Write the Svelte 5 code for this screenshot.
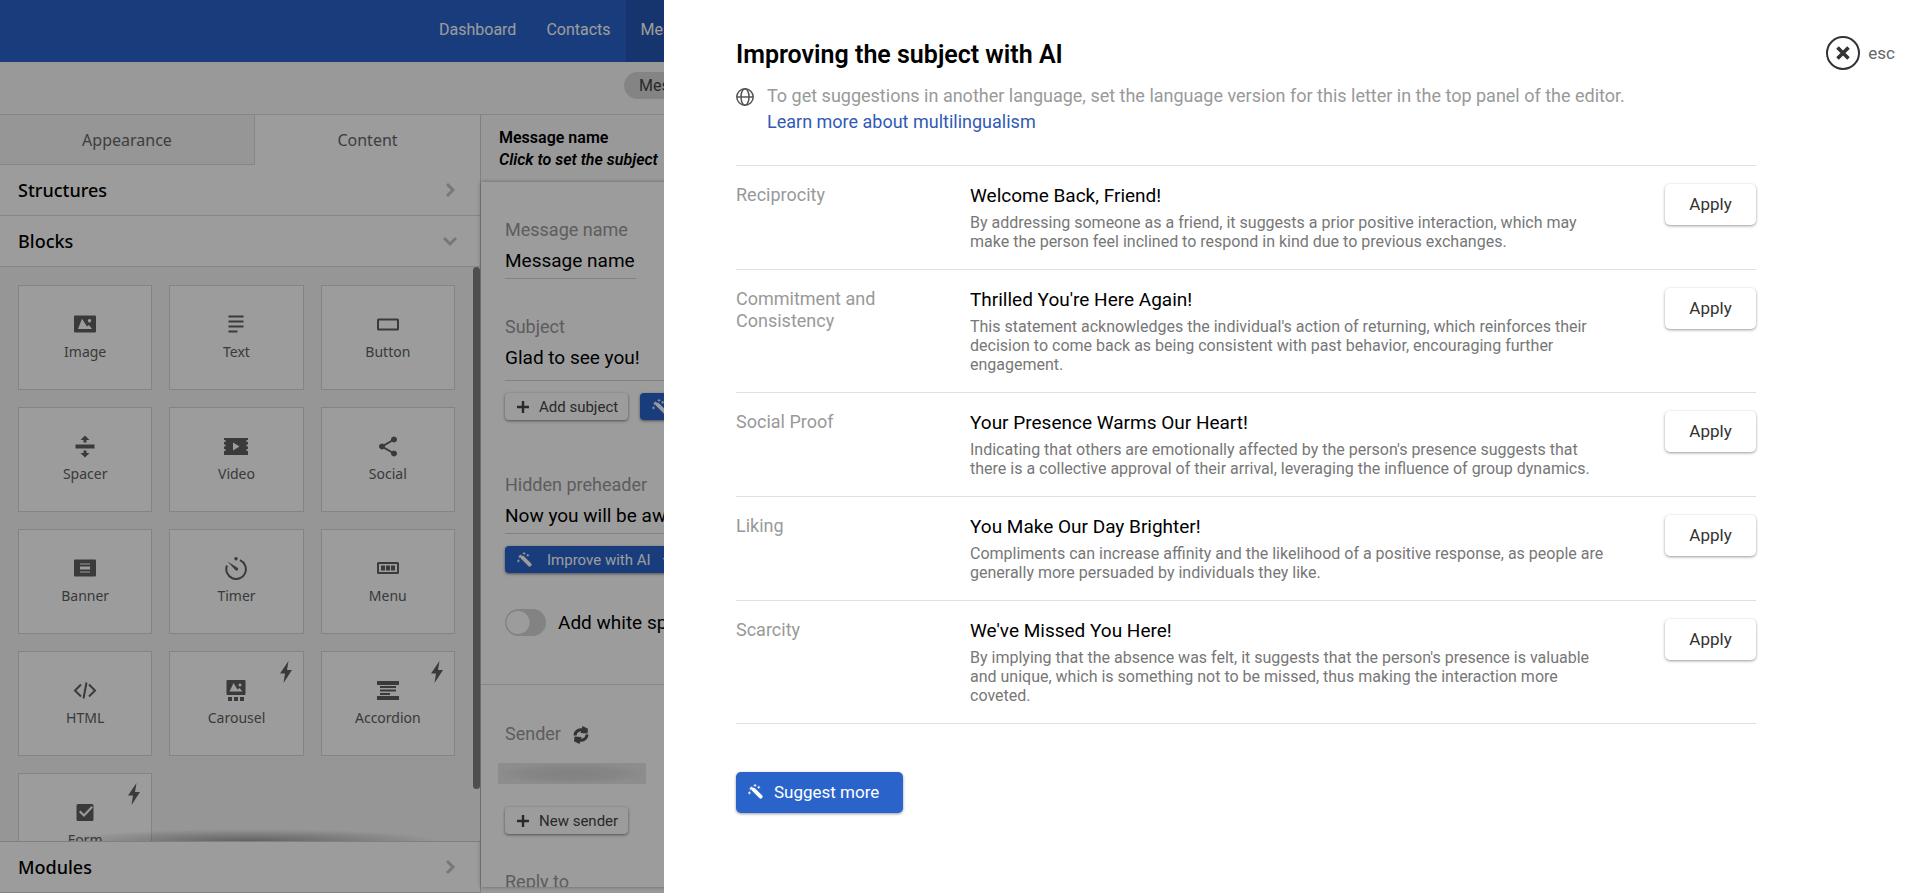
<script>
  // fill: solid shapes, line: stroked shapes, all on a 24x24 grid
  const blocks = [
    { name: 'Image', fill: 'M2 3.500h20a1 1 0 0 1 1 1v15a1 1 0 0 1-1 1H2a1 1 0 0 1-1-1v-15a1 1 0 0 1 1-1zM5 17h14l-3-4-2 1.500L9 6.800zM16.500 7a1.700 1.700 0 1 0 .01 0z' },
    { name: 'Text', line: 'M4.500 4.500h15M4.500 9.500h15M4.500 14.500h15M4.500 19.500h9' },
    { name: 'Button', line: 'M2.500 7.500h19a.5.5 0 0 1 .5.5v9a.5.5 0 0 1-.5.5h-19a.5.5 0 0 1-.5-.5V8a.5.5 0 0 1 .5-.5z' },
    { name: 'Spacer', fill: 'M2.500 10.500h19v4h-19zM12 1.500l4.500 4.500h-3v2.500h-3V6h-3zM12 23.500l4.500-4.500h-3v-2.500h-3V19h-3z' },
    { name: 'Video', fill: 'M0 4h24v2h-1.500v2H24v2.500h-1.500v2H24V15h-1.500v2H24v4H0v-4h1.500v-2H0v-2.500h1.500v-2H0V8h1.500V6H0zM9 8.500v8l6.500-4z' },
    { name: 'Social', fill: 'M6 9.500a3 3 0 1 0 .01 0zM18 2.500a3 3 0 1 0 .01 0zM18 16.500a3 3 0 1 0 .01 0z', line: 'M18 5.500L6 12.500l12 7' },
    { name: 'Banner', fill: 'M2 3.500h20a1 1 0 0 1 1 1v15a1 1 0 0 1-1 1H2a1 1 0 0 1-1-1v-15a1 1 0 0 1 1-1zM7 7.500v1h10v-1zM7 10.500v3h10v-3zM7 15.500v1h10v-1z' },
    { name: 'Timer', fill: 'M12 1a1.700 1.700 0 1 0 .01 0zM3.500 5.500l10 6.200a1.600 1.600 0 0 1-2 2.600z', line: 'M16 4.200A9.800 9.800 0 1 1 3 9.500' },
    { name: 'Menu', fill: 'M5 9.500h4v5H5zM10 9.500h4v5h-4zM15 9.500h4v5h-4z', line: 'M2.500 7h19a.5.5 0 0 1 .5.5v9a.5.5 0 0 1-.5.5h-19a.5.5 0 0 1-.5-.5v-9a.5.5 0 0 1 .5-.5z' },
    { name: 'HTML', line: 'M8 6.500L2 12.500l6 6M16 6.500l6 6-6 6M13.500 4.500l-3 16' },
    { name: 'Carousel', bolt: true, fill: 'M3.500 2h17a1 1 0 0 1 1 1v13a1 1 0 0 1-1 1h-17a1 1 0 0 1-1-1V3a1 1 0 0 1 1-1zM5.500 13.500h13l-3-3.500-2 1.500L9.500 5zM16 5.500a1.500 1.500 0 1 0 .01 0zM4 19h4v4H4zM10 19h4v4h-4zM16 19h4v4h-4z' },
    { name: 'Accordion', bolt: true, fill: 'M1 3h22v4H1zM4 8h16v2H4zM4 11.500h16v2H4zM4 15h10v2H4zM1 18h22v4H1z' },
    { name: 'Form', bolt: true, fill: 'M5 4h14a1.500 1.500 0 0 1 1.500 1.500v14A1.500 1.500 0 0 1 19 21H5a1.500 1.500 0 0 1-1.500-1.500v-14A1.500 1.500 0 0 1 5 4zM6 12l5 5 9-9.500-1.500-1.500L11 14l-3.500-3.500z' }
  ];

  const suggestions = [
    {
      principle: 'Reciprocity',
      subject: 'Welcome Back, Friend!',
      reason: 'By addressing someone as a friend, it suggests a prior positive interaction, which may make the person feel inclined to respond in kind due to previous exchanges.'
    },
    {
      principle: 'Commitment and Consistency',
      subject: "Thrilled You're Here Again!",
      reason: "This statement acknowledges the individual's action of returning, which reinforces their decision to come back as being consistent with past behavior, encouraging further engagement."
    },
    {
      principle: 'Social Proof',
      subject: 'Your Presence Warms Our Heart!',
      reason: "Indicating that others are emotionally affected by the person's presence suggests that there is a collective approval of their arrival, leveraging the influence of group dynamics."
    },
    {
      principle: 'Liking',
      subject: 'You Make Our Day Brighter!',
      reason: 'Compliments can increase affinity and the likelihood of a positive response, as people are generally more persuaded by individuals they like.'
    },
    {
      principle: 'Scarcity',
      subject: "We've Missed You Here!",
      reason: "By implying that the absence was felt, it suggests that the person's presence is valuable and unique, which is something not to be missed, thus making the interaction more coveted."
    }
  ];

  let name = $state('Message name');
  let subject = $state('Glad to see you!');
  let preheader = $state('Now you will be aware');
  let whiteSpace = $state(false);
  let open = $state(true);
</script>

<svelte:window onkeydown={(e) => e.key === 'Escape' && (open = false)} />

{#snippet wand()}
  <svg class="wand" viewBox="0 0 16 16" aria-hidden="true">
    <path d="M6 6l7.500 7.500" fill="none" stroke="currentColor" stroke-width="4" stroke-linecap="round" />
    <path d="M1 4.200l1.800-.2.400-1.800 1 1.600 1.800-.3-1.200 1.400.8 1.600-1.800-.6L2.500 7.200l.1-1.900z" fill="currentColor" />
    <path d="M7.500 0v3M6 1.500h3M11.500 2v3M10 3.500h3M1.500 8v3M0 9.500h3" stroke="currentColor" stroke-width="0.900" />
  </svg>
{/snippet}

{#snippet plus()}
  <svg class="plus" viewBox="0 0 12 12" aria-hidden="true">
    <path d="M6 0v12M0 6h12" stroke="currentColor" stroke-width="2.400" />
  </svg>
{/snippet}

{#snippet chevron(down)}
  <svg class="chevron" viewBox="0 0 14 14" aria-hidden="true">
    <path d={down ? 'M1 4l6 6 6-6' : 'M4 1l6 6-6 6'} fill="none" stroke="currentColor" stroke-width="3" />
  </svg>
{/snippet}

<div class="editor">
  <nav class="topnav">
    <a href="#dashboard">Dashboard</a>
    <a href="#contacts">Contacts</a>
    <a href="#messages" class="active">Messages</a>
  </nav>

  <div class="toolbar">
    <button class="pill">Messages</button>
  </div>

  <div class="workspace">
    <aside class="panel">
      <div class="tabs" role="tablist">
        <button role="tab" aria-selected="false">Appearance</button>
        <button role="tab" aria-selected="true" class="selected">Content</button>
      </div>
      <button class="section">Structures {@render chevron(false)}</button>
      <button class="section">Blocks {@render chevron(true)}</button>
      <div class="blocks">
        <div class="grid">
          {#each blocks as block}
            <div class="block">
              <svg class="glyph" viewBox="0 0 24 24" aria-hidden="true">
                {#if block.fill}
                  <path d={block.fill} fill="currentColor" fill-rule="evenodd" />
                {/if}
                {#if block.line}
                  <path d={block.line} fill="none" stroke="currentColor" stroke-width="2" />
                {/if}
              </svg>
              <span>{block.name}</span>
              {#if block.bolt}
                <svg class="bolt" viewBox="0 0 12 22" aria-hidden="true">
                  <path d="M8.500 0L0 12.500h5L3.500 22 12 9H7z" fill="currentColor" />
                </svg>
              {/if}
            </div>
          {/each}
        </div>
        <div class="thumb"></div>
        <div class="fade"></div>
      </div>
      <button class="section modules">Modules {@render chevron(false)}</button>
    </aside>

    <main class="message">
      <header>
        <strong>Message name</strong>
        <em>Click to set the subject</em>
      </header>
      <div class="sheet">
        <div class="field name">
          <label for="name">Message name</label>
          <div class="entry"><input id="name" bind:value={name} /></div>
        </div>

        <div class="field">
          <label for="subject">Subject</label>
          <div class="entry tall"><input id="subject" bind:value={subject} /></div>
          <div class="actions">
            <button class="small">{@render plus()} Add subject</button>
            <button class="small ai">{@render wand()} Improve with AI</button>
          </div>
        </div>

        <div class="field preheader">
          <label for="preheader">Hidden preheader</label>
          <div class="entry"><input id="preheader" bind:value={preheader} /></div>
          <div class="actions">
            <button class="small ai">{@render wand()} <span>Improve with AI</span> {@render chevron(true)}</button>
          </div>
        </div>

        <label class="switch">
          <input type="checkbox" bind:checked={whiteSpace} />
          Add white space
        </label>

        <section class="sender">
          <div class="caption">
            Sender
            <svg class="refresh" viewBox="0 0 16 18" aria-hidden="true">
              <path d="M2 9.500a6 6 0 0 1 8.500-5.200M14 8.500a6 6 0 0 1-8.500 5.200" fill="none" stroke="currentColor" stroke-width="3" />
              <path d="M9.500 0l5.500 2.800-.5 4.700L7.500 7zM6.500 18L1 15.200l.5-4.700 7 .5z" fill="currentColor" />
            </svg>
          </div>
          <div class="masked"></div>
          <button class="small">{@render plus()} New sender</button>
          <div class="caption reply">Reply to</div>
        </section>
      </div>
    </main>
  </div>
</div>

{#if open}
  <div class="backdrop"></div>
  <div class="drawer" role="dialog" aria-labelledby="drawer-title">
    <div class="content">
      <h1 id="drawer-title">Improving the subject with AI</h1>
      <div class="info">
        <svg class="globe" viewBox="0 0 18 18" fill="none" stroke="currentColor" stroke-width="1.500" aria-hidden="true">
          <circle cx="9" cy="9" r="8.200" />
          <ellipse cx="9" cy="9" rx="4" ry="8.200" />
          <path d="M1 9h16" />
        </svg>
        <p>
          To get suggestions in another language, set the language version for this letter in the top panel of the editor.<br />
          <a href="#multilingualism">Learn more about multilingualism</a>
        </p>
      </div>

      <ul class="suggestions">
        {#each suggestions as s}
          <li>
            <span class="principle">{s.principle}</span>
            <div>
              <h2>{s.subject}</h2>
              <p>{s.reason}</p>
            </div>
            <button class="apply" onclick={() => (subject = s.subject)}>Apply</button>
          </li>
        {/each}
      </ul>

      <button class="more">{@render wand()} Suggest more</button>
    </div>

    <button class="close" onclick={() => (open = false)}>
      <svg viewBox="0 0 36 36" fill="none" stroke="#333" aria-hidden="true">
        <circle cx="18" cy="18" r="16" stroke-width="2" />
        <path d="M12.500 12.500l11 11M23.500 12.500l-11 11" stroke-width="3.600" />
      </svg>
      esc
    </button>
  </div>
{/if}

<style>
  :global(body) {
    overflow: hidden;
  }
  * {
    box-sizing: border-box;
  }
  button,
  input {
    font: inherit;
    color: inherit;
    border: 0;
    padding: 0;
    margin: 0;
    background: none;
  }
  button {
    cursor: pointer;
    white-space: nowrap;
  }
  a {
    text-decoration: none;
  }
  h1,
  h2,
  p,
  ul {
    margin: 0;
    padding: 0;
    font-weight: 400;
  }

  .editor {
    display: flex;
    flex-direction: column;
    height: 100vh;
    background: #fbfbfb;
    font-family: Roboto, 'Liberation Sans', sans-serif;
    color: #000;
  }
  .topnav {
    display: flex;
    flex: none;
    height: 62px;
    padding-left: 424px;
    background: #2a64cb;
    font-size: 16px;
    line-height: 60px;
  }
  .topnav a {
    padding: 0 15px;
    color: #fff;
  }
  .topnav .active {
    background: #2457b4;
  }
  .toolbar {
    flex: none;
    height: 53px;
    padding: 10px 0 0 624px;
    border-bottom: 1px solid #dcdcdc;
  }
  .pill {
    height: 27px;
    padding: 0 15px;
    border-radius: 14px;
    background: #d8d8d8;
    color: #444;
    font-size: 16px;
  }
  .workspace {
    display: flex;
    flex: 1;
    min-height: 0;
  }

  .panel {
    display: flex;
    flex-direction: column;
    flex: none;
    width: 481px;
    border-right: 1px solid #d0d0d0;
    border-bottom: 1px solid #d8d8d8;
    background: #fff;
    font-family: 'Noto Sans', sans-serif;
  }
  .tabs {
    display: flex;
    flex: none;
    height: 50px;
  }
  .tabs button {
    flex: 1;
    color: #666;
    font-size: 16px;
  }
  .tabs button:not(.selected) {
    flex: none;
    width: 255px;
    border: solid #dcdcdc;
    border-width: 0 1px 1px 0;
    background: #f5f5f5;
  }
  .section {
    display: flex;
    flex: none;
    align-items: center;
    justify-content: space-between;
    height: 51px;
    padding: 0 23px 0 18px;
    border-bottom: 1px solid #dcdcdc;
    font-size: 18px;
    font-weight: 500;
  }
  .modules {
    border-bottom: 0;
    border-top: 1px solid #d0d0d0;
  }
  .chevron {
    width: 14px;
    height: 14px;
  }
  .section .chevron {
    color: #c4c4c4;
  }
  .blocks {
    position: relative;
    flex: 1;
    min-height: 0;
    overflow: hidden;
    background: #f5f5f5;
  }
  .grid {
    display: grid;
    grid-template-columns: repeat(3, 1fr);
    grid-auto-rows: 105px;
    gap: 17px;
    padding: 18px 25px 18px 18px;
  }
  .block {
    position: relative;
    display: flex;
    flex-direction: column;
    align-items: center;
    gap: 6px;
    padding-top: 26px;
    border: 1px solid #d8d8d8;
    background: #fff;
    color: #606060;
    font-size: 14px;
    line-height: 20px;
  }
  .glyph {
    width: 24px;
    height: 24px;
  }
  .bolt {
    position: absolute;
    top: 9px;
    right: 11px;
    width: 12px;
    height: 22px;
  }
  .thumb {
    position: absolute;
    top: 0;
    right: 0;
    width: 7px;
    height: 91%;
    border-radius: 4px;
    background: #808080;
  }
  .fade {
    position: absolute;
    right: 40px;
    bottom: 0;
    left: 60px;
    height: 12px;
    background: radial-gradient(farthest-side at 50% 100%, rgba(0, 0, 0, 0.35), transparent);
  }

  .message {
    display: flex;
    flex-direction: column;
    flex: 1;
    min-width: 0;
    padding-bottom: 6px;
  }
  .message header {
    display: flex;
    flex-direction: column;
    flex: none;
    height: 67px;
    padding: 12px 18px 0;
    font-size: 16px;
    line-height: 22px;
  }
  .message strong,
  .message em {
    font-weight: 600;
  }
  .sheet {
    flex: 1;
    min-height: 0;
    overflow: hidden;
    padding: 38px 0 0 24px;
    background: #fff;
    box-shadow: 0 0 4px rgba(0, 0, 0, 0.35);
    font-size: 19px;
  }
  .field {
    margin-bottom: 38px;
  }
  .field label,
  .caption {
    display: block;
    color: #999;
    font-size: 18px;
    line-height: 22px;
  }
  .field label {
    margin-bottom: 2px;
    line-height: 20px;
  }
  .entry {
    border-bottom: 1px solid #d4d4d4;
  }
  .name .entry {
    width: 131px;
  }
  .tall {
    padding-bottom: 5px;
  }
  .entry input {
    display: block;
    width: 100%;
    height: 36px;
    outline: 0;
  }
  .actions {
    display: flex;
    gap: 12px;
    margin-top: 12px;
  }
  .small {
    display: flex;
    align-items: center;
    gap: 10px;
    height: 27px;
    padding: 0 10px 0 12px;
    border-radius: 4px;
    background: #fff;
    box-shadow: 0 1px 3px rgba(0, 0, 0, 0.5);
    color: #444;
    font-size: 15px;
  }
  .small.ai {
    gap: 12px;
    background: #2a64cb;
    color: #fff;
  }
  .small .wand {
    margin-right: 3px;
  }
  .small .chevron {
    width: 10px;
    height: 10px;
  }
  .plus {
    width: 12px;
    height: 12px;
  }
  .wand {
    width: 15px;
    height: 15px;
  }
  .preheader {
    margin-top: 55px;
    margin-bottom: 36px;
  }
  .switch {
    display: flex;
    align-items: center;
    gap: 12px;
    height: 27px;
  }
  .switch input {
    appearance: none;
    width: 41px;
    height: 27px;
    border-radius: 14px;
    background: radial-gradient(circle at 13px 50%, #fff 11px, transparent 12px) #d6d6d6;
  }
  .switch input:checked {
    background: radial-gradient(circle at 28px 50%, #fff 11px, transparent 12px) #2a64cb;
  }
  .sender {
    margin: 48px 0 0 -24px;
    padding: 38px 0 0 24px;
    border-top: 1px solid #dcdcdc;
  }
  .refresh {
    width: 16px;
    height: 18px;
    margin-left: 8px;
    color: #555;
    vertical-align: -4px;
  }
  .masked {
    width: 148px;
    height: 21px;
    margin: 18px 0 23px -7px;
    background: radial-gradient(closest-side, #d4d4d4, #dadada 60%, #e6e6e6);
  }
  .reply {
    margin-top: 37px;
  }

  .backdrop {
    position: fixed;
    inset: 0;
    background: rgba(0, 0, 0, 0.39);
  }
  .drawer {
    position: fixed;
    top: 0;
    right: 0;
    bottom: 0;
    left: 664px;
    display: flex;
    align-items: flex-start;
    justify-content: space-between;
    padding: 35px 25px 35px 72px;
    overflow: auto;
    background: #fff;
    font-family: Roboto, 'Liberation Sans', sans-serif;
  }
  .content {
    flex: 0 1 1020px;
    padding-top: 6px;
  }
  h1 {
    font-size: 25px;
    font-weight: 600;
    line-height: 28px;
  }
  .info {
    display: flex;
    gap: 13px;
    margin: 14px 0 30px;
    color: #999;
    font-size: 18px;
    line-height: 26px;
  }
  .info a {
    color: #3159b5;
  }
  .globe {
    flex: none;
    width: 18px;
    height: 18px;
    margin-top: 5px;
    color: #555;
  }
  .suggestions {
    list-style: none;
    border-bottom: 1px solid #e0e0e0;
  }
  li {
    display: grid;
    grid-template-columns: 194px 1fr 91px;
    column-gap: 40px;
    align-items: start;
    padding: 18px 0;
    border-top: 1px solid #e0e0e0;
  }
  .principle {
    max-width: 160px;
    color: #999;
    font-size: 18px;
    line-height: 22px;
  }
  h2 {
    margin: 1px 0 6px;
    color: #000;
    font-size: 19px;
    line-height: 22px;
  }
  li p {
    max-width: 640px;
    color: #777;
    font-size: 16px;
    line-height: 19px;
  }
  .apply,
  .more {
    height: 41px;
    padding-bottom: 2px;
    border-radius: 5px;
    box-shadow: 0 1px 3px rgba(0, 0, 0, 0.4);
    color: #333;
    font-size: 17px;
  }
  .more {
    display: flex;
    align-items: center;
    gap: 11px;
    margin-top: 48px;
    padding: 0 24px 2px 12px;
    background: #2a64cb;
    color: #fff;
  }
  .close {
    display: flex;
    align-items: center;
    gap: 7px;
    color: #666;
    font-size: 17px;
  }
  .close svg {
    width: 36px;
    height: 36px;
  }
</style>
